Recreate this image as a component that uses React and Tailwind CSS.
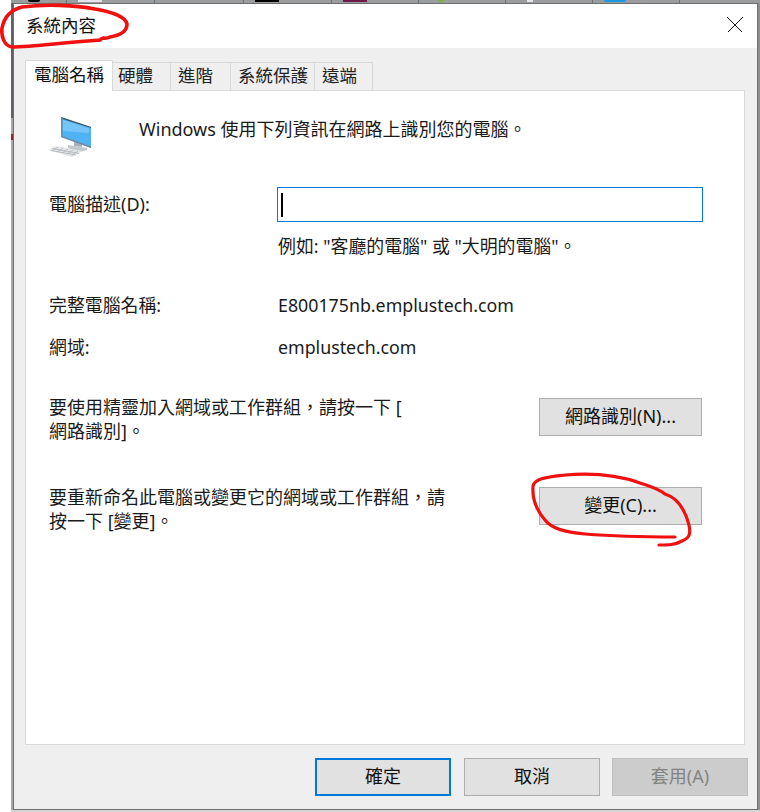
const FONT = "font-['Noto_Sans','Noto_Sans_CJK_TC',sans-serif]";

function TopStrip() {
  const cells = [
    ["w-[56px]", <div key="a" className="w-3 h-[2px] bg-black rounded-b-full ml-[17px]" />],
    ["w-[88px]", <div key="b" className="w-6 h-[2px] bg-[#e3e5e8] ml-[11px]" />],
    ["w-[89px]", null],
    ["w-[88px]", <div key="c" className="w-6 h-[2px] bg-black ml-[11px]" />],
    ["w-[87px]", <div key="d" className="w-6 h-[2px] bg-[#6d1a47] ml-[11px]" />],
    ["w-[87px]", <div key="e" className="w-[6px] h-[2px] bg-[#7fb23a] rounded-b-full ml-[19px]" />],
    ["w-[87px]", <div key="f" className="w-[6px] h-[2px] bg-[#e3e5e8] ml-[21px]" />],
    ["w-[87px]", <div key="g" className="w-[22px] h-[2px] bg-[#1a9ae0] rounded-b-md ml-[11px]" />],
    ["flex-1", null],
  ];
  return (
    <div className="ml-[11px] h-[3px] flex bg-[#9a9c9e] shrink-0">
      {cells.map(([w, c], i) => (
        <div key={i} className={`${w} h-full border-r border-[#6f7275] last:border-r-0`}>{c}</div>
      ))}
    </div>
  );
}

function Tab({ label, w, active }) {
  return active ? (
    <div className={`${w} h-[31px] -mb-px z-10 bg-white border border-b-0 border-[#d9d9d9] pl-[8px] text-[17.5px] leading-[26px] text-[#111]`}>
      {label}
    </div>
  ) : (
    <div className={`${w} h-[28px] mt-[2px] bg-[#efefef] border border-l-0 border-b-0 border-[#d9d9d9] text-[17.5px] leading-[25px] text-[#222]`}>
      {label}
    </div>
  );
}

function Btn({ children, w = "w-[163px]", className = "border-[#adadad] bg-[#e1e1e1] text-[#111]" }) {
  return (
    <div className={`${w} h-[38px] shrink-0 border flex items-center justify-center pb-[2px] text-[18px] leading-none ${className}`}>
      {children}
    </div>
  );
}

function PcIcon() {
  return (
    <svg width="46" height="44" viewBox="0 0 46 44" className="block">
      <path d="M19 30 L38 33 V35 L30 37 L19 33 Z" fill="#c3c8cc" />
      <path d="M25 27 L33 29 V32 L25 31 Z" fill="#aab0b5" />
      <path d="M12 2 L42 12 V33 L12 22 Z" fill="#4fb3f6" />
      <path d="M14 5 L40 13.5 V18 L14 16 Z" fill="#8ed0fb" opacity="0.6" />
      <path d="M12 2 L42 12 V13 L12 3.5 Z" fill="#47535c" />
      <path d="M12 2 V22 L42 33 V31.5 L13.5 21 V3 Z" fill="#73899a" />
      <path d="M0 35 L6 31 L34 36 L23 42 Z" fill="#e2e5e8" />
      <path d="M3 33.5 L30 38.5 M1.5 35.5 L27 40 M9 32 L3 36 M14 33 L8 37 M19 34 L13 38 M24 35 L18 39 M29 36 L23 40" stroke="#a9aeb3" strokeWidth="0.7" fill="none" />
    </svg>
  );
}

function Row({ label, value, className }) {
  return (
    <div className={`flex ${className}`}>
      <div className="w-[229px] shrink-0 text-[17.9px]">{label}</div>
      <div className="text-[17.8px]">{value}</div>
    </div>
  );
}

export default function App() {
  return (
    <div className={`relative w-[760px] h-[812px] overflow-hidden bg-white flex flex-col text-[#1a1a1a] ${FONT}`}>
      <TopStrip />
      <div className="flex flex-1 min-h-0">
        <div className="ml-[11px] w-[2px] flex flex-col shrink-0">
          <div className="h-[115px] bg-[#5f6368]" />
          <div className="h-[16px] bg-[#a9a9a9]" />
          <div className="h-[6px] bg-[#8b2a2a]" />
          <div className="flex-1 bg-[#a9a9a9]" />
        </div>
        <div className="w-[745px] border border-[#6e6e6e] bg-[#efefef] flex flex-col">
          <div className="h-[44px] shrink-0 bg-white flex items-center justify-between pl-[12px] pr-[14px]">
            <span className="text-[17.5px] text-[#111] -mt-[2px]">系統內容</span>
            <svg className="-mt-[2px]" width="16" height="16" viewBox="0 0 16 16" shapeRendering="crispEdges"><path d="M0.5 0.5 L15.5 15.5 M15.5 0.5 L0.5 15.5" stroke="#111" strokeWidth="1" fill="none" /></svg>
          </div>
          <div className="flex-1 flex flex-col pl-[11px] pr-[12px] pt-[12px]">
            <div className="flex">
              <Tab label="電腦名稱" w="w-[88px]" active />
              <Tab label="硬體" w="w-[58px] pl-[5px]" />
              <Tab label="進階" w="w-[60px] pl-[7px]" />
              <Tab label="系統保護" w="w-[84px] pl-[7px]" />
              <Tab label="遠端" w="w-[58px] pl-[7px]" />
            </div>
            <div className="h-[655px] bg-white border border-[#d9d9d9] pl-[23px] pr-[42px] text-[18px] leading-[26px]">
              <div className="flex mt-[24px]">
                <div className="w-[90px] shrink-0"><PcIcon /></div>
                <div className="mt-[1px]">Windows 使用下列資訊在網路上識別您的電腦。</div>
              </div>
              <div className="flex items-center mt-[28px]">
                <div className="w-[228px] shrink-0 pb-[2px]">電腦描述(D):</div>
                <div className="flex-1 -mr-px h-[35px] border border-[#0078d7] flex items-center pl-[3px]">
                  <div className="w-[2px] h-[24px] bg-black" />
                </div>
              </div>
              <div className="ml-[229px] mt-[11px] text-[17.9px]">例如: "客廳的電腦" 或 "大明的電腦"。</div>
              <Row label="完整電腦名稱:" value="E800175nb.emplustech.com" className="mt-[33px]" />
              <Row label="網域:" value="emplustech.com" className="mt-[16px]" />
              <div className="flex justify-between items-start mt-[38px]">
                <div className="w-[400px] h-[38px] -mt-[3px] leading-[24px]">要使用精靈加入網域或工作群組，請按一下 [<br />網路識別]。</div>
                <Btn>網路識別(N)...</Btn>
              </div>
              <div className="flex justify-between items-start mt-[51px]">
                <div className="w-[400px] h-[38px] -mt-[2px] leading-[24px]">要重新命名此電腦或變更它的網域或工作群組，請<br />按一下 [變更]。</div>
                <Btn>變更(C)...</Btn>
              </div>
            </div>
            <div className="flex justify-end -mr-[3px] mt-[13px]">
              <Btn w="w-[136px]" className="border-2 border-[#0078d7] bg-[#e1e1e1] text-[#111]">確定</Btn>
              <Btn w="w-[136px] ml-[13px]" className="border-[#adadad] bg-[#e1e1e1] text-[#111]">取消</Btn>
              <Btn w="w-[136px] ml-[12px]" className="border-[#bfbfbf] bg-[#cccccc] text-[#838383]">套用(A)</Btn>
            </div>
          </div>
        </div>
        <div className="w-[2px] bg-[#8f8f8f]" />
      </div>
      <div className="h-[2px] ml-[11px] bg-[#d4d4d4] shrink-0" />
      <svg className="absolute inset-0 pointer-events-none" width="760" height="812" viewBox="0 0 760 812" fill="none">
        <path d="M100 40 C103 36 104 40 110 37 C122 35 127 30 127 24 C125 16 112 12 95 9 C75 5 45 4 22 7 C10 10 4 18 2 28 C1 36 4 46 12 47 C30 47 60 43 100 40" stroke="#f01010" strokeWidth="3.6" strokeLinecap="round" />
        <path d="M675 537 C640 537 610 536 585 534 C565 532 552 529 545 520 C538 512 532 500 533 486 C535 478 548 477 565 475 C590 473 615 474 640 483 C650 486 660 490 665 494 C678 498 685 510 689 525 C691 535 689 538 682 541 C675 545 668 545 659 545" stroke="#f01010" strokeWidth="3.2" strokeLinecap="round" />
      </svg>
    </div>
  );
}
